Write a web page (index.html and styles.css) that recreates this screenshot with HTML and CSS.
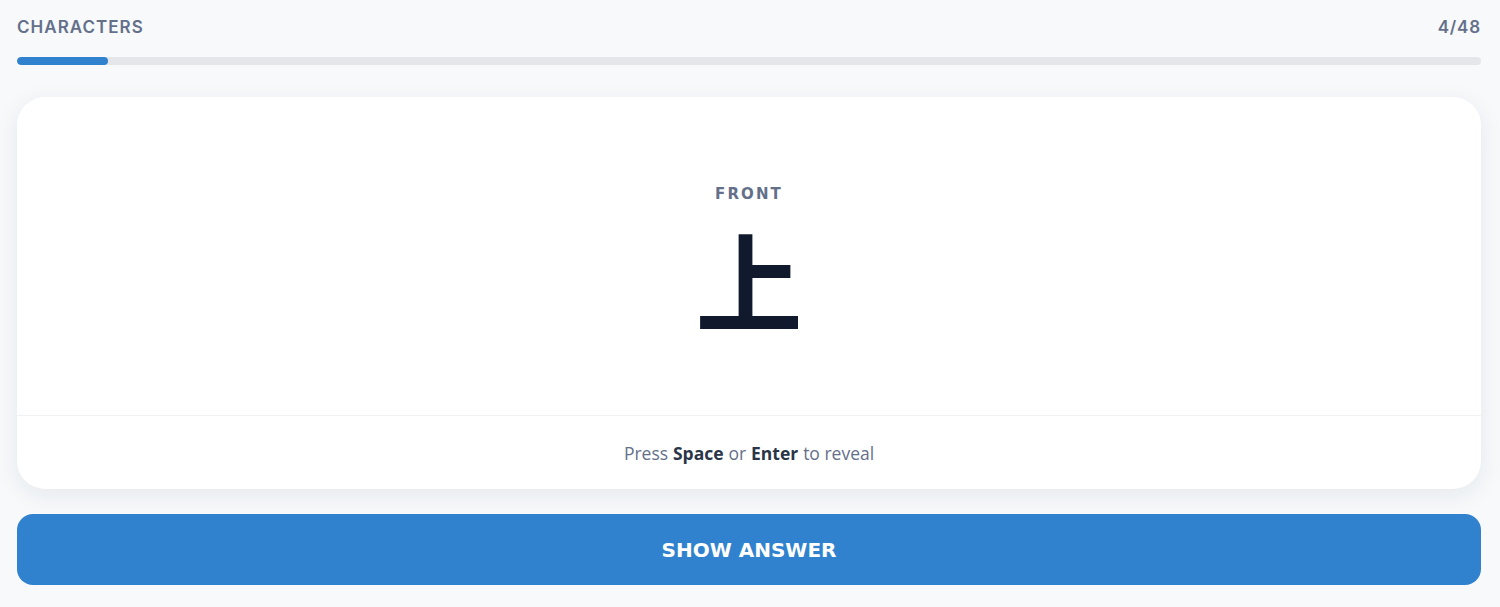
FILE: index.html
```html
<!DOCTYPE html>
<html lang="en">
<head>
<meta charset="utf-8">
<title>Characters</title>
<link rel="stylesheet" href="styles.css">
</head>
<body>
<div class="page">
  <header class="top">
    <span class="deck">CHARACTERS</span>
    <span class="count">4/48</span>
  </header>
  <div class="progress"><div class="fill" style="width:6.2%"></div></div>
  <section class="card">
    <div class="face">
      <div class="side">FRONT</div>
      <div class="glyph" lang="zh">上</div>
    </div>
    <div class="hint">Press <b>Space</b> or <b>Enter</b> to reveal</div>
  </section>
  <button class="reveal">SHOW ANSWER</button>
</div>
</body>
</html>
```
FILE: styles.css
```css
html, body {
  margin: 0;
  padding: 0;
  background: #f7f9fb;
}
body {
  font-family: "Inter", "Liberation Sans", sans-serif;
}
.page {
  padding: 17px 19px 0 17px;
  display: flex;
  flex-direction: column;
}
.top {
  display: flex;
  justify-content: space-between;
  align-items: center;
  height: 20px;
  color: #64708a;
  font-size: 17px;
  font-weight: 600;
  letter-spacing: 0.06em;
}
.count {
  letter-spacing: 0.05em;
}
.progress {
  margin-top: 20px;
  height: 8px;
  background: #e4e6ea;
  border-radius: 4px;
  overflow: hidden;
}
.fill {
  height: 100%;
  background: #3182ce;
  border-radius: 4px;
}
.card {
  margin-top: 32px;
  background: #ffffff;
  border-radius: 28px;
  box-shadow: 0 6px 24px rgba(30, 40, 60, 0.08);
  display: flex;
  flex-direction: column;
}
.face {
  height: 319px;
  border-bottom: 1px solid #f0f1f3;
  display: flex;
  flex-direction: column;
  align-items: center;
  padding-top: 88px;
  box-sizing: border-box;
}
.side {
  font-family: "DejaVu Sans", sans-serif;
  font-weight: bold;
  font-size: 15px;
  letter-spacing: 0.14em;
  color: #64708a;
  line-height: 18px;
}
.glyph {
  font-family: "Noto Sans CJK SC", sans-serif;
  font-weight: 700;
  font-size: 107px;
  line-height: 100px;
  color: #111a2c;
  margin-top: 25px;
}
.hint {
  height: 73px;
  display: flex;
  align-items: center;
  justify-content: center;
  font-family: "Open Sans", sans-serif;
  font-size: 17.5px;
  color: #64708a;
  gap: 0.28em;
}
.hint b {
  color: #2a3548;
  font-weight: 700;
}
.reveal {
  margin-top: 25px;
  height: 71px;
  border: none;
  border-radius: 16px;
  background: #3182ce;
  color: #ffffff;
  font-family: "DejaVu Sans", sans-serif;
  font-weight: bold;
  font-size: 20px;
  letter-spacing: 0;
}
```
